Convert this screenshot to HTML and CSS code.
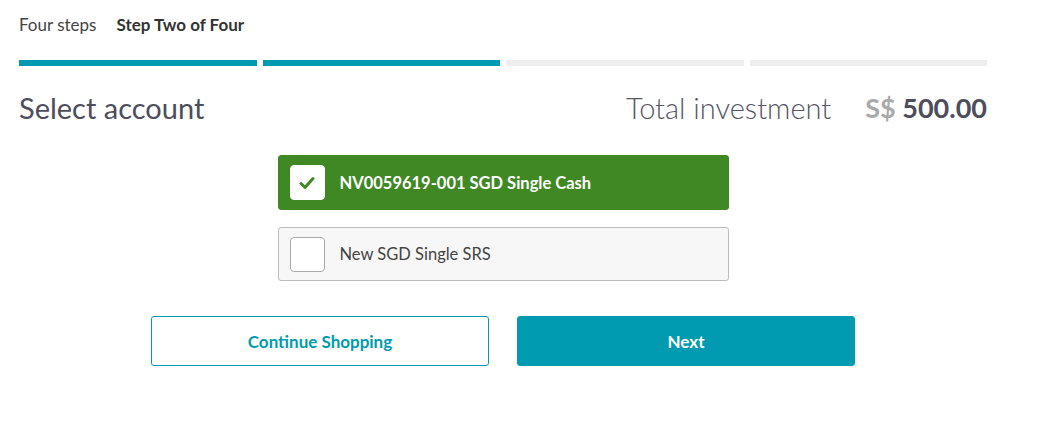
FILE: index.html
```html
<!DOCTYPE html>
<html>
<head>
<meta charset="utf-8">
<link rel="stylesheet" href="styles.css">
</head>
<body>
<div class="page">
  <div class="steps-label">
    <span class="steps-total">Four steps</span>
    <span class="steps-current">Step Two of Four</span>
  </div>
  <div class="progress">
    <div class="seg done"></div>
    <div class="seg done"></div>
    <div class="seg"></div>
    <div class="seg"></div>
  </div>
  <div class="title-row">
    <h1 class="title">Select account</h1>
    <div class="total">
      <span class="total-label">Total investment</span>
      <span class="amount"><span class="currency">S$</span> 500.00</span>
    </div>
  </div>
  <div class="accounts">
    <div class="account selected">
      <span class="check">
        <svg width="16" height="14" viewBox="0 0 16 14"><path d="M2 7.5 L6 11.5 L14 2.5" fill="none" stroke="#3f8824" stroke-width="3" stroke-linecap="round" stroke-linejoin="round"/></svg>
      </span>
      <span class="account-name">NV0059619-001 SGD Single Cash</span>
    </div>
    <div class="account">
      <span class="check"></span>
      <span class="account-name">New SGD Single SRS</span>
    </div>
  </div>
  <div class="actions">
    <button class="btn btn-outline">Continue Shopping</button>
    <button class="btn btn-primary">Next</button>
  </div>
</div>
</body>
</html>
```
FILE: styles.css
```css
* { box-sizing: border-box; }
body {
  margin: 0;
  font-family: "Lato", "Noto Sans", sans-serif;
  color: #4d4d5c;
  background: #fff;
}
.page {
  width: 968px;
  margin-left: 19px;
  padding-top: 14px;
}
.steps-label {
  display: flex;
  gap: 20px;
  font-size: 17px;
  line-height: 22px;
  height: 22px;
}
.steps-total { color: #444; }
.steps-current { font-weight: 700; color: #333; }
.progress {
  display: grid;
  grid-template-columns: repeat(4, 1fr);
  gap: 6px;
  margin-top: 24px;
}
.seg { height: 6px; background: #eeeeee; }
.seg.done { background: #009bb0; }
.title-row {
  display: flex;
  justify-content: space-between;
  align-items: center;
  margin-top: 21px;
  height: 40px;
}
.title {
  margin: 0;
  font-size: 29px;
  font-weight: 400;
  color: #4d4d5c;
}
.total { display: flex; align-items: center; gap: 34px; }
.total-label { font-size: 29px; font-weight: 300; color: #555566; }
.amount { font-size: 27px; font-weight: 700; color: #4d4d5c; }
.currency { color: #a9a9a9; }
.accounts {
  width: 451px;
  margin: 28px auto 0;
  display: flex;
  flex-direction: column;
  gap: 17px;
}
.account {
  display: flex;
  align-items: center;
  gap: 15px;
  height: 54px;
  padding: 0 11px;
  border: 1px solid #bbbbbb;
  border-radius: 3px;
  background: #f7f7f7;
  font-size: 16.5px;
  color: #444;
}
.account.selected {
  height: 55px;
  background: #3f8824;
  border-color: #3f8824;
  color: #fff;
  font-weight: 700;
}
.check {
  width: 35px;
  height: 35px;
  border: 1px solid #aaa;
  border-radius: 4px;
  background: #fff;
  display: flex;
  align-items: center;
  justify-content: center;
}
.selected .check { border-color: #fff; }
.actions {
  display: flex;
  justify-content: center;
  gap: 28px;
  margin-top: 35px;
}
.btn {
  width: 338px;
  height: 50px;
  border-radius: 3px;
  font-family: inherit;
  font-size: 17px;
  font-weight: 700;
  cursor: pointer;
}
.btn-outline {
  background: #fff;
  border: 1px solid #009bb0;
  color: #009bb0;
}
.btn-primary {
  background: #009bb0;
  border: 1px solid #009bb0;
  color: #fff;
}
```
